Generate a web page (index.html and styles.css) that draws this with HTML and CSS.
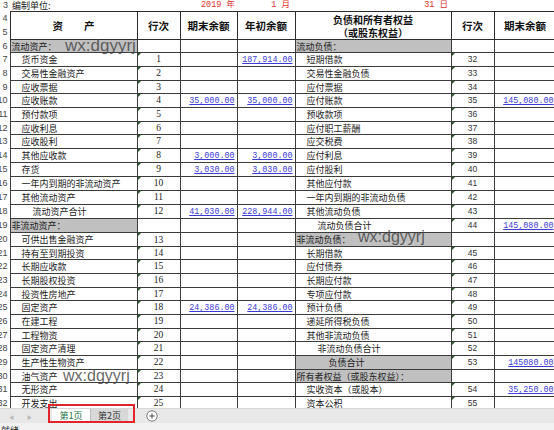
FILE: index.html
```html
<!DOCTYPE html>
<html lang="zh-CN">
<head>
<meta charset="utf-8">
<title>资产负债表</title>
<link rel="stylesheet" href="styles.css">
</head>
<body>
<div class="screen">
  <div class="sheet">
    <table class="grid">
      <colgroup>
        <col class="w-rh"><col class="w-b"><col class="w-c"><col class="w-d"><col class="w-e"><col class="w-f"><col class="w-g"><col class="w-h">
      </colgroup>
      <tbody>
        <tr class="h11"><td class="rh">3</td><td class="t i0">编制单位:</td><td></td><td class="red">2019 年</td><td class="red">1 月</td><td class="red">31 日</td><td></td><td></td></tr>
        <tr class="h14 hd"><td class="rh">4</td><th rowspan="2">资　　产</th><th rowspan="2">行次</th><th rowspan="2">期末余额</th><th rowspan="2">年初余额</th><th rowspan="2"><div class="l1">负债和所有者权益</div><div class="l2">（或股东权益）</div></th><th rowspan="2">行次</th><th rowspan="2">期末余额</th></tr>
        <tr class="h14 hd"><td class="rh">5</td></tr>

        <tr class="h13 b"><td class="rh">6</td><td class="t sec">流动资产：</td><td class="c"></td><td class="a"></td><td class="a"></td><td class="t sec">流动负债：</td><td class="g"></td><td class="a"></td></tr>
        <tr class="h14 b"><td class="rh">7</td><td class="t i1">货币资金</td><td class="c tri">1</td><td class="a"></td><td class="a"><span class="num">187,914.00</span></td><td class="t i1">短期借款</td><td class="g tri">32</td><td class="a"></td></tr>
        <tr class="h14 b"><td class="rh">8</td><td class="t i1">交易性金融资产</td><td class="c tri">2</td><td class="a"></td><td class="a"></td><td class="t i1">交易性金融负债</td><td class="g tri">33</td><td class="a"></td></tr>
        <tr class="h13 b"><td class="rh">9</td><td class="t i1">应收票据</td><td class="c tri">3</td><td class="a"></td><td class="a"></td><td class="t i1">应付票据</td><td class="g tri">34</td><td class="a"></td></tr>
        <tr class="h14 b"><td class="rh">10</td><td class="t i1">应收账款</td><td class="c tri">4</td><td class="a"><span class="num">35,000.00</span></td><td class="a"><span class="num">35,000.00</span></td><td class="t i1">应付账款</td><td class="g tri">35</td><td class="a"><span class="num">145,080.00</span></td></tr>
        <tr class="h14 b"><td class="rh">11</td><td class="t i1">预付款项</td><td class="c tri">5</td><td class="a"></td><td class="a"></td><td class="t i1">预收款项</td><td class="g tri">36</td><td class="a"></td></tr>
        <tr class="h13 b"><td class="rh">12</td><td class="t i1">应收利息</td><td class="c tri">6</td><td class="a"></td><td class="a"></td><td class="t i1">应付职工薪酬</td><td class="g tri">37</td><td class="a"></td></tr>
        <tr class="h14 b"><td class="rh">13</td><td class="t i1">应收股利</td><td class="c tri">7</td><td class="a"></td><td class="a"></td><td class="t i1">应交税费</td><td class="g tri">38</td><td class="a"></td></tr>
        <tr class="h14 b"><td class="rh">14</td><td class="t i1">其他应收款</td><td class="c tri">8</td><td class="a"><span class="num">3,000.00</span></td><td class="a"><span class="num">3,000.00</span></td><td class="t i1">应付利息</td><td class="g tri">39</td><td class="a"></td></tr>
        <tr class="h13 b"><td class="rh">15</td><td class="t i1">存货</td><td class="c tri">9</td><td class="a"><span class="num">3,030.00</span></td><td class="a"><span class="num">3,030.00</span></td><td class="t i1">应付股利</td><td class="g tri">40</td><td class="a"></td></tr>
        <tr class="h14 b"><td class="rh">16</td><td class="t i1">一年内到期的非流动资产</td><td class="c tri">10</td><td class="a"></td><td class="a"></td><td class="t i1">其他应付款</td><td class="g tri">41</td><td class="a"></td></tr>
        <tr class="h14 b"><td class="rh">17</td><td class="t i1">其他流动资产</td><td class="c tri">11</td><td class="a"></td><td class="a"></td><td class="t i1">一年内到期的非流动负债</td><td class="g tri">42</td><td class="a"></td></tr>
        <tr class="h13 b"><td class="rh">18</td><td class="t i2">流动资产合计</td><td class="c tri">12</td><td class="a"><span class="num">41,030.00</span></td><td class="a"><span class="num">228,944.00</span></td><td class="t i1">其他流动负债</td><td class="g tri">43</td><td class="a"></td></tr>
        <tr class="h14 b"><td class="rh">19</td><td class="t sec">非流动资产：</td><td class="c"></td><td class="a"></td><td class="a"></td><td class="t i2">流动负债合计</td><td class="g tri">44</td><td class="a"><span class="num">145,080.00</span></td></tr>
        <tr class="h14 b"><td class="rh">20</td><td class="t i1">可供出售金融资产</td><td class="c tri low">13</td><td class="a"></td><td class="a"></td><td class="t sec">非流动负债：</td><td class="g"></td><td class="a"></td></tr>
        <tr class="h13 b"><td class="rh">21</td><td class="t i1">持有至到期投资</td><td class="c tri low">14</td><td class="a"></td><td class="a"></td><td class="t i1">长期借款</td><td class="g tri">45</td><td class="a"></td></tr>
        <tr class="h14 b"><td class="rh">22</td><td class="t i1">长期应收款</td><td class="c tri">15</td><td class="a"></td><td class="a"></td><td class="t i1">应付债券</td><td class="g tri">46</td><td class="a"></td></tr>
        <tr class="h14 b"><td class="rh">23</td><td class="t i1">长期股权投资</td><td class="c tri">16</td><td class="a"></td><td class="a"></td><td class="t i1">长期应付款</td><td class="g tri">47</td><td class="a"></td></tr>
        <tr class="h13 b"><td class="rh">24</td><td class="t i1">投资性房地产</td><td class="c tri low">17</td><td class="a"></td><td class="a"></td><td class="t i1">专项应付款</td><td class="g tri">48</td><td class="a"></td></tr>
        <tr class="h14 b"><td class="rh">25</td><td class="t i1">固定资产</td><td class="c tri">18</td><td class="a"><span class="num">24,386.00</span></td><td class="a"><span class="num">24,386.00</span></td><td class="t i1">预计负债</td><td class="g tri">49</td><td class="a"></td></tr>
        <tr class="h14 b"><td class="rh">26</td><td class="t i1">在建工程</td><td class="c tri">19</td><td class="a"></td><td class="a"></td><td class="t i1">递延所得税负债</td><td class="g tri">50</td><td class="a"></td></tr>
        <tr class="h13 b"><td class="rh">27</td><td class="t i1">工程物资</td><td class="c tri">20</td><td class="a"></td><td class="a"></td><td class="t i1">其他非流动负债</td><td class="g tri">51</td><td class="a"></td></tr>
        <tr class="h14 b"><td class="rh">28</td><td class="t i1">固定资产清理</td><td class="c tri">21</td><td class="a"></td><td class="a"></td><td class="t i2">非流动负债合计</td><td class="g tri">52</td><td class="a"></td></tr>
        <tr class="h14 b"><td class="rh">29</td><td class="t i1">生产性生物资产</td><td class="c tri">22</td><td class="a"></td><td class="a"></td><td class="t i3 sec">负债合计</td><td class="g tri">53</td><td class="a"><span class="num">145080.00</span></td></tr>
        <tr class="h13 b"><td class="rh">30</td><td class="t i1">油气资产</td><td class="c tri">23</td><td class="a"></td><td class="a"></td><td class="t sec">所有者权益（或股东权益）：</td><td class="g"></td><td class="a"></td></tr>
        <tr class="h14 b"><td class="rh">31</td><td class="t i1">无形资产</td><td class="c tri">24</td><td class="a"></td><td class="a"></td><td class="t i1">实收资本（或股本）</td><td class="g tri">54</td><td class="a"><span class="num">35,250.00</span></td></tr>
        <tr class="h14 b"><td class="rh">32</td><td class="t i1">开发支出</td><td class="c tri">25</td><td class="a"></td><td class="a"></td><td class="t i1">资本公积</td><td class="g tri">55</td><td class="a"></td></tr>
      </tbody>
    </table>
    <div class="wm wm1">wx:dgyyrj</div>
    <div class="wm wm2">wx:dgyyrj</div>
    <div class="wm wm3">wx:dgyyrj</div>
  </div>

  <div class="tabbar">
    <div class="nav">
      <span class="arrow">&#9664;</span>
      <span class="arrow">&#9654;</span>
    </div>
    <div class="tabs">
      <div class="tab active">第1页</div>
      <div class="tab">第2页</div>
    </div>
    <div class="add">
      <svg width="12" height="12" viewBox="0 0 12 12"><circle cx="6" cy="6" r="5.2" fill="#fafafa" stroke="#7a7a7a" stroke-width="1"/><path d="M6 3.4v5.2M3.4 6h5.2" stroke="#555" stroke-width="1.1"/></svg>
    </div>
  </div>
  <div class="status">就绪</div>
  <div class="mark"></div>
</div>
</body>
</html>
```

FILE: styles.css
```css
html, body {
  margin: 0;
  padding: 0;
  background: #ffffff;
}

body {
  font-family: "Noto Sans CJK SC", "Noto Sans", sans-serif;
  color: #1a1a1a;
}

.screen {
  position: relative;
  width: 554px;
  height: 430px;
  overflow: hidden;
  background: #ffffff;
}

.sheet {
  position: relative;
  height: 408px;
  overflow: hidden;
}

.grid {
  border-collapse: collapse;
  table-layout: fixed;
  width: 556px;
}

.w-rh { width: 10px; }
.w-b { width: 127px; }
.w-c { width: 43px; }
.w-d { width: 57px; }
.w-e { width: 58px; }
.w-f { width: 156px; }
.w-g { width: 43px; }
.w-h { width: 62px; }

.grid td,
.grid th {
  padding: 0;
  font-size: 9px;
  line-height: 11px;
  white-space: nowrap;
  overflow: hidden;
  vertical-align: middle;
}

.h11 { height: 11px; }
.h13 { height: 13px; }
.h14 { height: 14px; }

.grid tr.b td:not(.rh) {
  border: 1px solid #3c3c3c;
}

.grid th {
  border: 1px solid #2c2c2c;
  font-weight: 700;
  font-size: 10.5px;
  line-height: 12px;
  text-align: center;
  color: #111;
}

.l1, .l2 {
  font-size: 10px;
  line-height: 13px;
  height: 13px;
}

.rh {
  direction: rtl;
  text-align: right;
  padding-right: 2px !important;
  font-family: "Liberation Sans", Arial, sans-serif;
  font-size: 9px !important;
  color: #444;
  background: #ffffff;
}

.t { text-align: left; }
.i0 { padding-left: 2px !important; }
.i1 { padding-left: 11px !important; }
.i2 { padding-left: 22px !important; }
.i3 { padding-left: 33px !important; }

.grid td.sec {
  background: #c0c0c0;
  padding-left: 1px;
}
.grid td.sec.i3 { padding-left: 33px !important; }

.red {
  color: #e0322f;
  text-align: right;
  padding-right: 2px !important;
  font-family: "Liberation Mono", "Noto Sans CJK SC", monospace;
  font-size: 8.5px !important;
}
.red:nth-child(5) { padding-right: 5px !important; }
.red:nth-child(6) { padding-right: 3px !important; }

.c {
  position: relative;
  text-align: center;
  font-family: "Liberation Serif", "Times New Roman", serif;
  font-size: 9.5px !important;
  color: #222;
}

.c.low { vertical-align: bottom !important; }

.g {
  position: relative;
  text-align: center;
  font-family: "Liberation Sans", Arial, sans-serif;
  font-size: 8.5px !important;
  color: #333;
}

.tri::before {
  content: "";
  position: absolute;
  left: 0;
  top: 0;
  width: 0;
  height: 0;
  border-top: 3px solid #245a24;
  border-right: 3px solid transparent;
}

.a {
  text-align: right;
  padding-right: 2px !important;
}

.num {
  font-family: "Liberation Mono", "Courier New", monospace;
  font-size: 8.4px;
  color: #3b3bd6;
  text-decoration: underline;
  text-underline-offset: 1px;
}

.wm {
  position: absolute;
  font-family: "Liberation Sans", Arial, sans-serif;
  line-height: 17px;
  color: rgba(72, 72, 72, 0.85);
  white-space: nowrap;
}
.wm1 { left: 65px; top: 37px; font-size: 17px; }
.wm2 { left: 358px; top: 228px; font-size: 16px; }
.wm3 { left: 63px; top: 367px; font-size: 16px; }

.tabbar {
  height: 15px;
  background: #e8e8e8;
  border-top: 1px solid #d6d6d6;
  box-sizing: border-box;
  display: flex;
  align-items: stretch;
}

.nav {
  width: 52px;
  display: flex;
  align-items: center;
  gap: 13px;
  padding-left: 9px;
  box-sizing: border-box;
}

.arrow {
  font-size: 5px;
  color: #b8b8b8;
  line-height: 5px;
}

.tabs {
  display: flex;
  height: 14px;
}

.tab {
  width: 38px;
  height: 14px;
  font-size: 9px;
  line-height: 14px;
  text-align: center;
  color: #333;
  background: #d8d8d8;
  border-left: 1px solid #bcbcbc;
  box-sizing: border-box;
}

.tab.active {
  background: #ffffff;
  color: #217346;
  border-left: none;
}

.add {
  margin-left: 18px;
  display: flex;
  align-items: center;
}

.add svg { display: block; }

.status {
  height: 7px;
  background: #f2f2f2;
  box-sizing: border-box;
  padding-top: 3px;
  padding-left: 1px;
  font-size: 9px;
  line-height: 10px;
  color: #222;
  overflow: hidden;
}

.mark {
  position: absolute;
  left: 48px;
  top: 404px;
  width: 87px;
  height: 19px;
  border: 2px solid #e2242b;
  box-sizing: border-box;
}
```
